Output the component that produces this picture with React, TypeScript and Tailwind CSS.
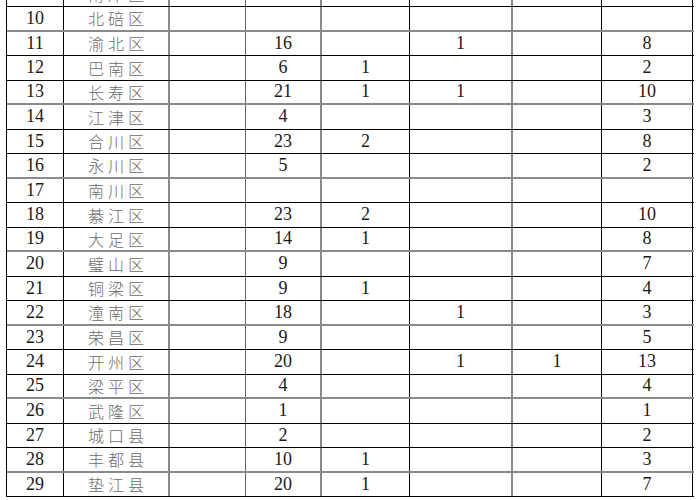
import React from 'react';

type Row = { no: string; name: string; v: string[] };

// v = values for the five count columns (after the blank column)
const rows: Row[] = [
  { no: '9', name: '南岸区', v: ['15', '', '1', '', '5'] },
  { no: '10', name: '北碚区', v: ['', '', '', '', ''] },
  { no: '11', name: '渝北区', v: ['16', '', '1', '', '8'] },
  { no: '12', name: '巴南区', v: ['6', '1', '', '', '2'] },
  { no: '13', name: '长寿区', v: ['21', '1', '1', '', '10'] },
  { no: '14', name: '江津区', v: ['4', '', '', '', '3'] },
  { no: '15', name: '合川区', v: ['23', '2', '', '', '8'] },
  { no: '16', name: '永川区', v: ['5', '', '', '', '2'] },
  { no: '17', name: '南川区', v: ['', '', '', '', ''] },
  { no: '18', name: '綦江区', v: ['23', '2', '', '', '10'] },
  { no: '19', name: '大足区', v: ['14', '1', '', '', '8'] },
  { no: '20', name: '璧山区', v: ['9', '', '', '', '7'] },
  { no: '21', name: '铜梁区', v: ['9', '1', '', '', '4'] },
  { no: '22', name: '潼南区', v: ['18', '', '1', '', '3'] },
  { no: '23', name: '荣昌区', v: ['9', '', '', '', '5'] },
  { no: '24', name: '开州区', v: ['20', '', '1', '1', '13'] },
  { no: '25', name: '梁平区', v: ['4', '', '', '', '4'] },
  { no: '26', name: '武隆区', v: ['1', '', '', '', '1'] },
  { no: '27', name: '城口县', v: ['2', '', '', '', '2'] },
  { no: '28', name: '丰都县', v: ['10', '1', '', '', '3'] },
  { no: '29', name: '垫江县', v: ['20', '1', '', '', '7'] },
];

const serif = "font-['Liberation_Serif',serif] text-[18px] text-[#1a1a1a]";

function TableRow({ row, idx }: { row: Row; idx: number }) {
  const grayLine = idx % 3 === 1;
  const bottom = grayLine ? 'border-b-2 border-b-[#8a8a8a]' : 'border-b border-b-black';
  return (
    <div className={`flex h-[24.5px] box-border ${bottom} ${idx === 0 ? '-mt-[17.5px]' : ''}`}>
      <div className={`w-[57px] border-r border-black flex items-center justify-center ${serif}`}>{row.no}</div>
      <div className="w-[106px] border-r-2 border-[#8a8a8a] flex items-center justify-center pl-[4px] font-['Noto_Sans_CJK_SC',sans-serif] font-light text-[16px] tracking-[4px] text-[#6b6b6b]">
        {row.name}
      </div>
      <div className="w-[76px] border-r border-[#666]" />
      <div className={`w-[76px] border-r-2 border-[#8a8a8a] flex items-center justify-center ${serif}`}>{row.v[0]}</div>
      <div className={`w-[88px] border-r border-black flex items-center justify-center ${serif}`}>{row.v[1]}</div>
      <div className={`w-[103px] border-r-2 border-[#8a8a8a] flex items-center justify-center ${serif}`}>{row.v[2]}</div>
      <div className={`w-[89px] border-r border-black flex items-center justify-center ${serif}`}>{row.v[3]}</div>
      <div className={`w-[91px] border-r border-black flex items-center justify-center ${serif}`}>{row.v[4]}</div>
    </div>
  );
}

export default function App() {
  return (
    <div className="w-[700px] h-[500px] overflow-hidden bg-white">
      <div className="ml-[6px] w-[688px] border-l border-black">
        {rows.map((r, i) => (
          <TableRow key={r.no} row={r} idx={i} />
        ))}
      </div>
    </div>
  );
}
